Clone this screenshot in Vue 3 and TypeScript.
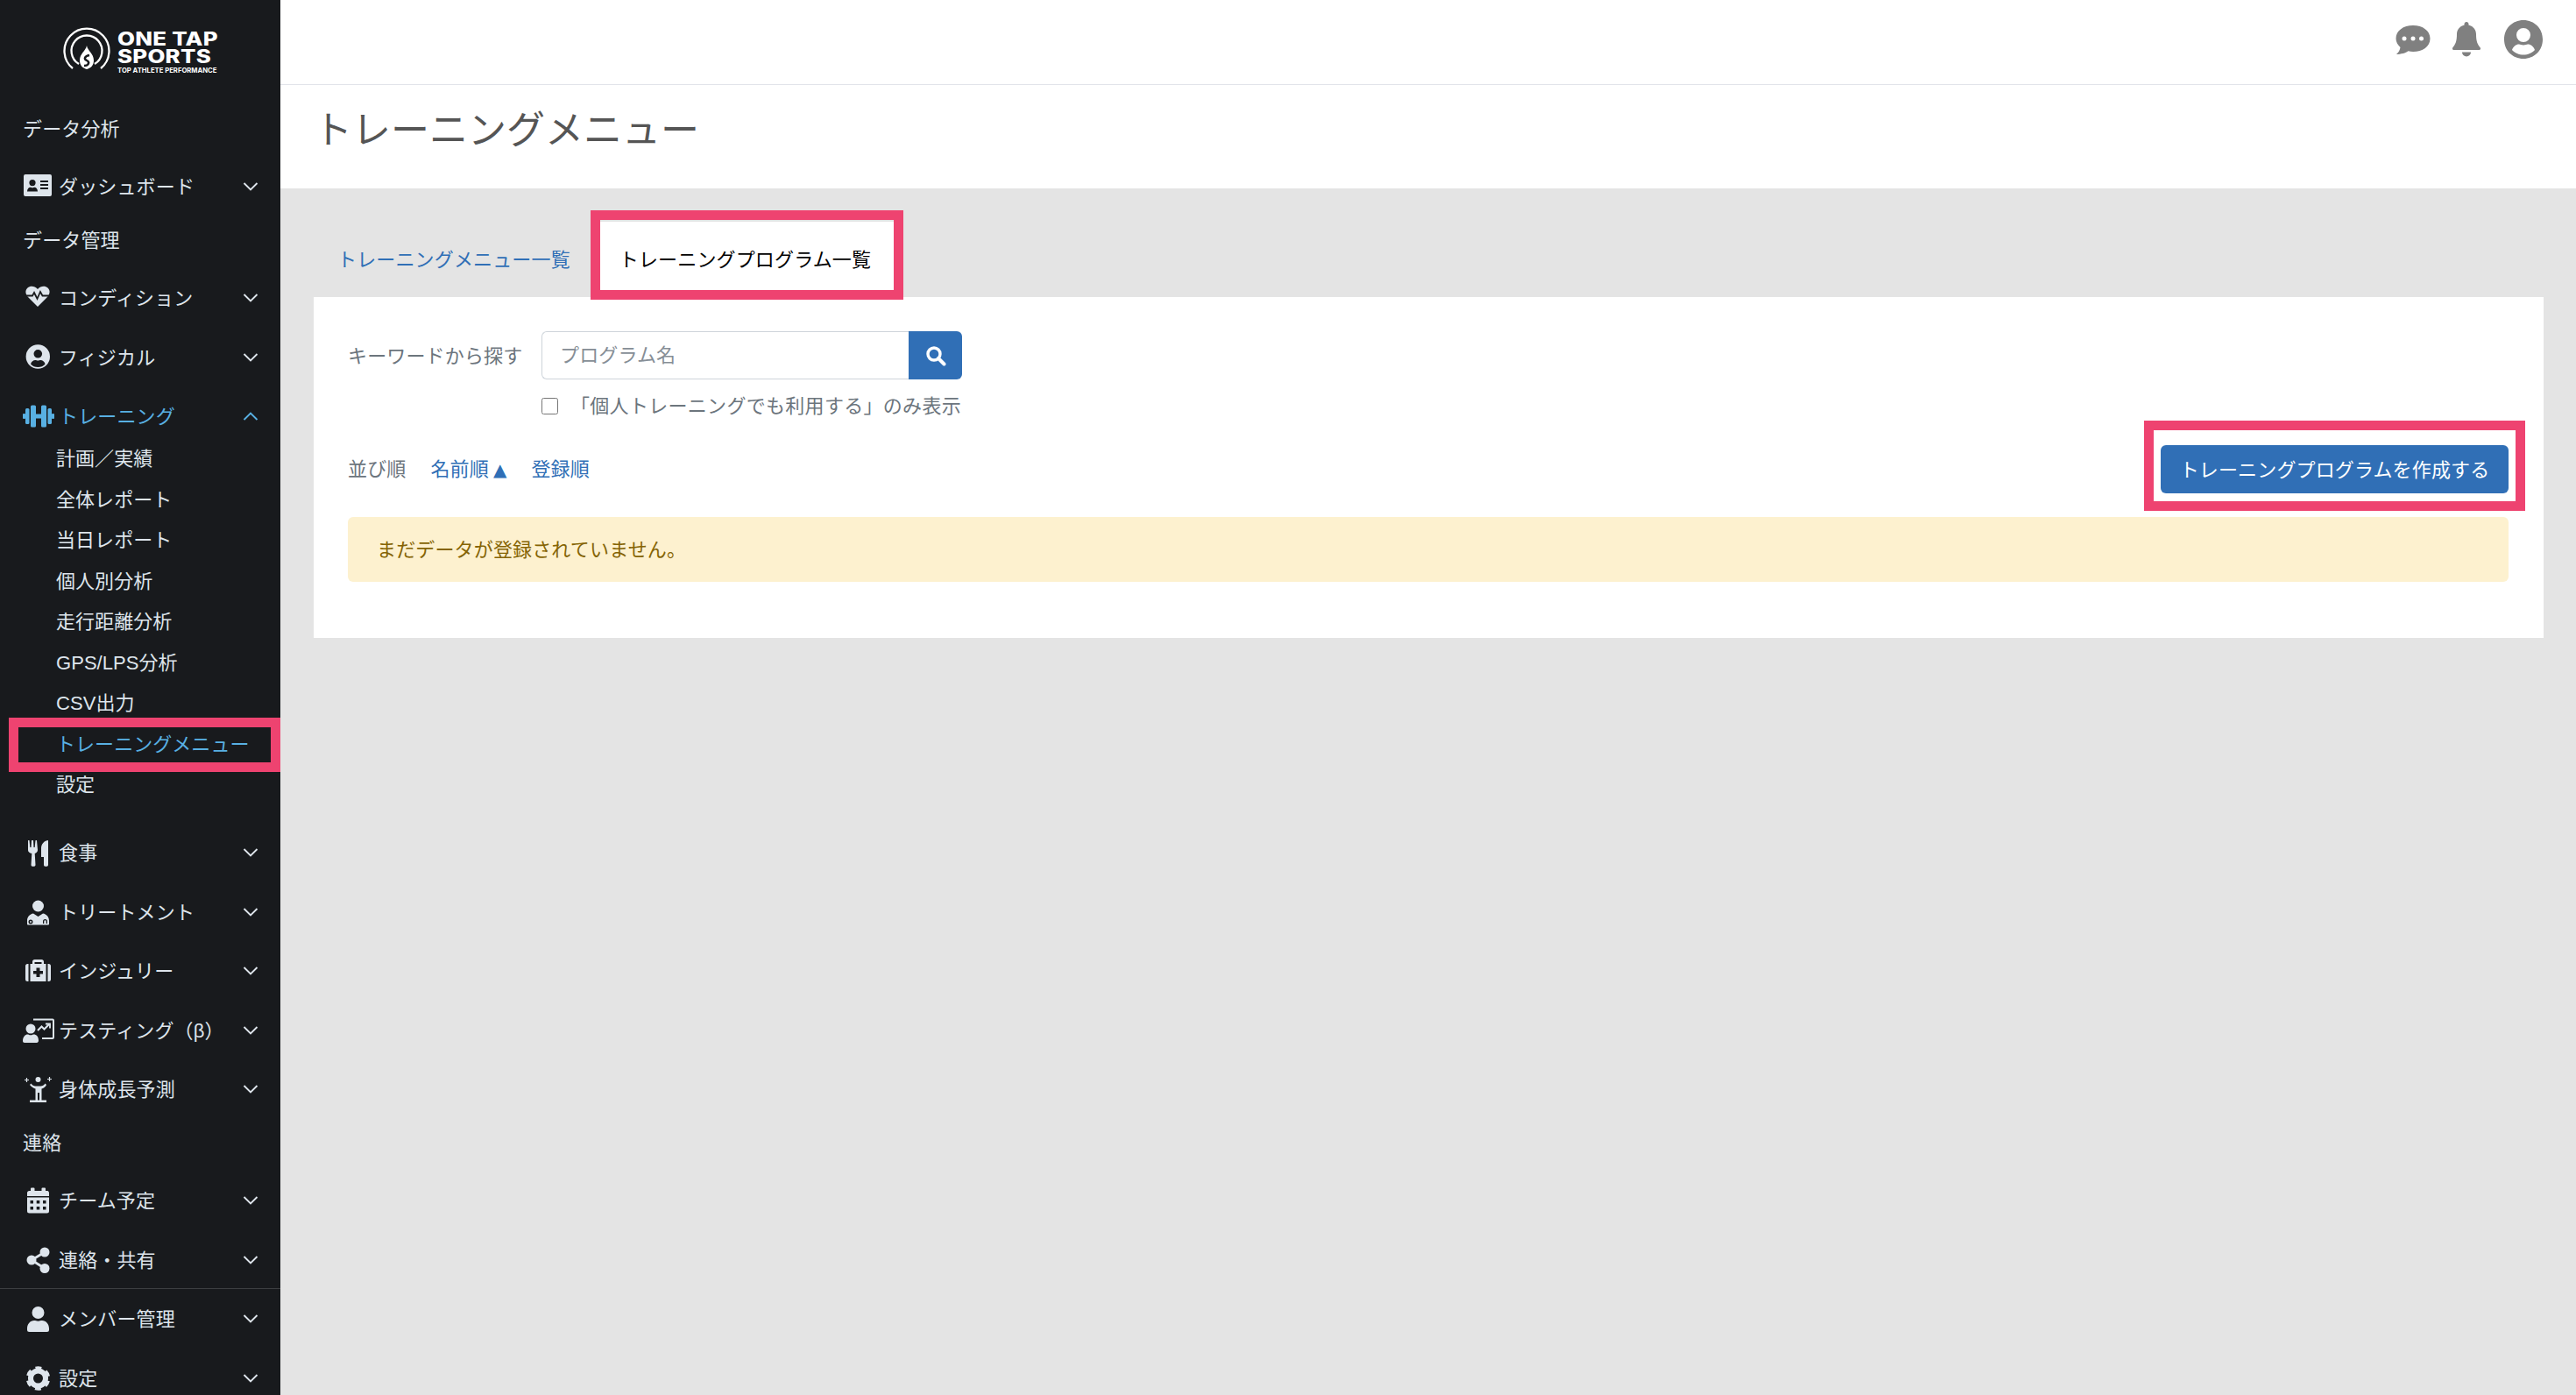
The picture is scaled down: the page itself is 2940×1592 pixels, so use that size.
<script setup lang="ts">
interface Entry {
  kind: 'label' | 'item'
  text: string
  icon?: string
  open?: boolean
  rule?: boolean
  subs?: string[]
}
const menu: Entry[] = [
  { kind: 'label', text: 'データ分析' },
  { kind: 'item', text: 'ダッシュボード', icon: 'card' },
  { kind: 'label', text: 'データ管理' },
  { kind: 'item', text: 'コンディション', icon: 'heart' },
  { kind: 'item', text: 'フィジカル', icon: 'ucircle' },
  {
    kind: 'item', text: 'トレーニング', icon: 'dumbbell', open: true,
    subs: ['計画／実績', '全体レポート', '当日レポート', '個人別分析', '走行距離分析', 'GPS/LPS分析', 'CSV出力', 'トレーニングメニュー', '設定'],
  },
  { kind: 'item', text: '食事', icon: 'food' },
  { kind: 'item', text: 'トリートメント', icon: 'doctor' },
  { kind: 'item', text: 'インジュリー', icon: 'aid' },
  { kind: 'item', text: 'テスティング（β）', icon: 'board' },
  { kind: 'item', text: '身体成長予測', icon: 'grow' },
  { kind: 'label', text: '連絡' },
  { kind: 'item', text: 'チーム予定', icon: 'cal' },
  { kind: 'item', text: '連絡・共有', icon: 'share' },
  { kind: 'item', text: 'メンバー管理', icon: 'user', rule: true },
  { kind: 'item', text: '設定', icon: 'cog' },
]
const activeSub = 'トレーニングメニュー'
</script>

<template>
  <div class="app">
    <svg class="sprite" aria-hidden="true">
      <defs>
        <symbol id="i-card" viewBox="0 0 36 36">
          <path fill-rule="evenodd" d="M3 4h28a2 2 0 0 1 2 2v21a2 2 0 0 1-2 2H3a2 2 0 0 1-2-2V6a2 2 0 0 1 2-2zM11 10a3.6 3.6 0 1 0 0 7.2 3.6 3.6 0 0 0 0-7.200zM5 23.500h12c0-3-2-4.800-3.500-4.800-1 0-1.500.5-2.500.5s-1.500-.5-2.500-.5C7 18.700 5 20.500 5 23.500zM20 11v2h9v-2zM20 15v2h9v-2zM20 19v2h9v-2z" fill="currentColor" />
        </symbol>
        <symbol id="i-heart" viewBox="0 0 36 36">
          <path d="M17 28 6.500 17.500C3 14 2.200 9.500 5.500 6.500c3-2.700 8-2.500 11.500 1.500 3.500-4 8.500-4.200 11.500-1.500 3.300 3 2.500 7.500-1 11z" fill="currentColor" />
          <path d="M3.500 15.500h7.500l2-3.500 3.500 7 3.500-8 2.500 4.500h8" fill="none" stroke="#181a1d" stroke-width="1.800" />
        </symbol>
        <symbol id="i-ucircle" viewBox="0 0 36 36">
          <path fill-rule="evenodd" d="M17.300 3.300a13.700 13.700 0 1 1 0 27.400 13.700 13.700 0 0 1 0-27.400zM17.300 9a4.800 4.800 0 1 0 0 9.600 4.800 4.800 0 0 0 0-9.600zM9 25.500c2 2.400 5 3.500 8.300 3.500s6.300-1.100 8.300-3.500c-.8-2.800-3-4.500-5.300-4.500-1 0-1.700.6-3 .6s-2-.6-3-.6c-2.300 0-4.500 1.700-5.300 4.500z" fill="currentColor" />
        </symbol>
        <symbol id="i-dumbbell" viewBox="0 0 36 36">
          <g fill="currentColor">
            <rect x="0" y="15" width="3" height="6" rx="1" />
            <rect x="3" y="9" width="4.500" height="18" rx="1.500" />
            <rect x="9" y="5.500" width="6" height="25" rx="1.500" />
            <rect x="15" y="15.500" width="6" height="5" />
            <rect x="21" y="5.500" width="6" height="25" rx="1.500" />
            <rect x="28.500" y="9" width="4.500" height="18" rx="1.500" />
            <rect x="33" y="15" width="3" height="6" rx="1" />
          </g>
        </symbol>
        <symbol id="i-food" viewBox="0 0 36 36">
          <path d="M6 4h1.500l.8 8h1.200l.5-8h2l.5 8h1.200l.8-8H16l1 11c0 2-1.500 3.500-3.300 4l.8 13c0 1-.8 1.800-2 1.800h-1c-1.200 0-2-.8-2-1.800l.8-13C7.500 18.500 6 17 6 15zM29 4v28c0 1-.8 1.800-1.800 1.800h-1.400c-1 0-1.800-.8-1.800-1.800v-9H21V13c0-5 4-9 8-9z" fill="currentColor" />
        </symbol>
        <symbol id="i-doctor" viewBox="0 0 36 36">
          <circle cx="17.500" cy="11" r="6.500" fill="currentColor" />
          <path fill-rule="evenodd" d="M5 31.500v-4c0-4 3-7.500 7-8l5.500 3.500 5.500-3.500c4 .5 7 4 7 8v4a1 1 0 0 1-1 1H6a1 1 0 0 1-1-1zM9 26.500a2.500 2.500 0 1 0 0 5 2.500 2.500 0 0 0 0-5zM9 28a1 1 0 1 1 0 2 1 1 0 0 1 0-2zM23 31v-2.500a2.500 2.500 0 0 1 5 0V31h-1.300v-2.500a1.200 1.200 0 0 0-2.400 0V31z" fill="currentColor" />
        </symbol>
        <symbol id="i-aid" viewBox="0 0 36 36">
          <path fill-rule="evenodd" d="M11 10V7.500c0-1.500 1.200-2.500 2.500-2.500h8c1.300 0 2.500 1 2.500 2.500V10h-2.500V8h-8v2zM8.500 10h18v20h-18zM15.500 14.500v3.500H12v3.500h3.500V25H19.500v-3.500H23V18h-3.500v-3.500zM3 12.500A2.500 2.500 0 0 1 5.500 10H6.500v20H5.500A2.500 2.500 0 0 1 3 27.500zM28.500 10h1A2.500 2.500 0 0 1 32 12.500v15a2.500 2.500 0 0 1-2.500 2.500h-1z" fill="currentColor" />
        </symbol>
        <symbol id="i-board" viewBox="0 0 36 36">
          <circle cx="9" cy="16" r="5.500" fill="currentColor" />
          <path d="M0 30c0-5 3-7.500 5.500-7.500 1 0 2 .8 3.500.8s2.500-.8 3.500-.8c3 0 5.500 2.500 5.500 7 0 1.500-1 2.500-2 2.500H2c-1.200 0-2-.9-2-2z" fill="currentColor" />
          <path d="M12 5.500h22a1 1 0 0 1 1 1V26a1 1 0 0 1-1 1H22" fill="none" stroke="currentColor" stroke-width="2" />
          <path d="M17 18l4.500-4.500 3 3L30 11" fill="none" stroke="currentColor" stroke-width="2" />
          <path d="M26 10.500h5v5" fill="none" stroke="currentColor" stroke-width="1.800" />
        </symbol>
        <symbol id="i-grow" viewBox="0 0 36 36">
          <circle cx="17.500" cy="7" r="3" fill="currentColor" />
          <path d="M9.500 11.500c1 2 3.500 3 5 3h6c1.500 0 4-1 5-3l1.500 1.500c-1 2.500-3.500 4-5.500 4.500V31h-2.500v-9h-2v9H14.500V17.500C12.500 17 10 15.500 8 13z" fill="currentColor" />
          <rect x="8" y="30.500" width="19" height="2.500" fill="currentColor" />
          <path d="M4.500 5v5M2 7.500h5M30.500 4v5M28 6.500h5" stroke="currentColor" stroke-width="1.200" />
        </symbol>
        <symbol id="i-cal" viewBox="0 0 36 36">
          <path fill-rule="evenodd" d="M10 3.500h2.500a1 1 0 0 1 1 1V7h8V4.500a1 1 0 0 1 1-1H25a1 1 0 0 1 1 1V7h2.500A2.500 2.500 0 0 1 30 9.500V13H5V9.500A2.500 2.500 0 0 1 7.500 7H9V4.500a1 1 0 0 1 1-1zM5 14.500h25V30a2.500 2.500 0 0 1-2.500 2.500h-20A2.500 2.500 0 0 1 5 30zM8.500 18v3.500h3.500V18zM15.700 18v3.500h3.600V18zM23 18v3.500h3.500V18zM8.500 25v3.500h3.500V25zM15.700 25v3.500h3.600V25zM23 25v3.500h3.500V25z" fill="currentColor" />
        </symbol>
        <symbol id="i-share" viewBox="0 0 36 36">
          <g fill="currentColor">
            <circle cx="25" cy="9" r="5.500" />
            <circle cx="10" cy="18" r="5.500" />
            <circle cx="25" cy="27.500" r="5.500" />
          </g>
          <path d="M25 9 10 18l15 9.500" fill="none" stroke="currentColor" stroke-width="2.800" />
        </symbol>
        <symbol id="i-user" viewBox="0 0 36 36">
          <circle cx="17.500" cy="11" r="7" fill="currentColor" />
          <path d="M5 29c0-5 3.500-9 8-9 1.500 0 2.500.7 4.500.7s3-.7 4.500-.7c4.500 0 8 4 8 9v1.500a2.500 2.500 0 0 1-2.500 2.500h-20A2.500 2.500 0 0 1 5 30.500z" fill="currentColor" />
        </symbol>
        <symbol id="i-cog" viewBox="0 0 36 36">
          <circle cx="17.500" cy="18" r="8.500" fill="none" stroke="currentColor" stroke-width="6" />
          <circle cx="17.500" cy="18" r="11.500" fill="none" stroke="currentColor" stroke-width="4.500" stroke-dasharray="6.500 5.540" transform="rotate(14 17.500 18)" />
        </symbol>
      </defs>
    </svg>

    <aside class="sidebar">
      <div class="logo">
        <svg class="logo-mark" viewBox="0 0 54 54" aria-hidden="true">
          <path d="M11 48A25.500 25.500 0 1 1 43 48" fill="none" stroke="#fff" stroke-width="2.300" />
          <path d="M18 43A17.500 17.500 0 1 1 36 43" fill="none" stroke="#fff" stroke-width="2.300" />
          <path d="M27 22C28 28 35 31 35 39 35 45 31 48 27 49 23 48 19 45 19 39 19 31 26 28 27 22Z" fill="#fff" />
          <path d="M30 33C25 34 23 37 27 39 31 41 29 45 24 45" fill="none" stroke="#181a1d" stroke-width="2.500" />
        </svg>
        <div class="logo-text">
          <div class="logo-big">ONE TAP</div>
          <div class="logo-big">SPORTS</div>
          <div class="logo-small">TOP ATHLETE PERFORMANCE</div>
        </div>
      </div>

      <nav class="menu">
        <template v-for="entry in menu" :key="entry.text + entry.kind">
          <div v-if="entry.kind === 'label'" class="label">{{ entry.text }}</div>
          <template v-else>
            <hr v-if="entry.rule" class="rule" />
            <div class="item" :class="{ active: entry.open }">
              <svg class="icon"><use :href="'#i-' + entry.icon" /></svg>
              <span class="item-text">{{ entry.text }}</span>
              <svg class="chev" viewBox="0 0 18 12" aria-hidden="true">
                <path :d="entry.open ? 'M1.500 10 9 2.500 16.500 10' : 'M1.500 2 9 9.500 16.500 2'" fill="none" stroke="currentColor" stroke-width="1.900" />
              </svg>
            </div>
            <ul v-if="entry.subs" class="subs">
              <li v-for="sub in entry.subs" :key="sub" class="sub" :class="{ current: sub === activeSub }">
                {{ sub }}
                <span v-if="sub === activeSub" class="mark mark-sub"></span>
              </li>
            </ul>
          </template>
        </template>
      </nav>
    </aside>

    <div class="main">
      <header class="topbar">
        <svg class="top-chat" viewBox="0 0 40 36" aria-hidden="true">
          <path d="M20 2c11 0 19.500 6 19.500 15S31 32 20 32c-2 0-3.500-.2-5.500-.7C12 33.500 6 35 1 35c2.500-2 4-5 4.500-8C2.500 24 .5 21 .5 17 .5 8 9 2 20 2z" fill="#808080" />
          <circle cx="10" cy="17" r="2.500" fill="#fff" />
          <circle cx="20" cy="17" r="2.500" fill="#fff" />
          <circle cx="29.500" cy="17" r="2.500" fill="#fff" />
        </svg>
        <svg class="top-bell" viewBox="0 0 34 40" aria-hidden="true">
          <path d="M17 0a2.500 2.500 0 0 1 2.300 3.500C25 5 28 9 28 14c0 8 1.500 11.500 4.500 15 1 1.200.7 3-1.200 3H2.700C.8 32 .5 30.200 1.500 29 4.500 25.500 6 22 6 14c0-5 3-9 8.700-10.500A2.500 2.500 0 0 1 17 0z" fill="#808080" />
          <path d="M12 34.500h10a5 5 0 0 1-10 0z" fill="#808080" />
        </svg>
        <svg class="top-user" viewBox="0 0 44 46" aria-hidden="true">
          <path fill-rule="evenodd" d="M22 1c12.500 0 22 9.500 22 22s-9.500 22-22 22S0 35.500 0 23 9.500 1 22 1zm0 9a8 8 0 1 0 0 16 8 8 0 0 0 0-16zM9 35c3 3.500 8 5.500 13 5.500s10-2 13-5.500c-1.500-4-4.500-6.500-8-6.500-1.500 0-2.500 1-5 1s-3.500-1-5-1c-3.500 0-6.500 2.500-8 6.500z" fill="#808080" />
        </svg>
      </header>

      <div class="title-bar">
        <h1 class="title">トレーニングメニュー</h1>
      </div>

      <main class="content">
        <div class="tabs">
          <a class="tab">トレーニングメニュー一覧</a>
          <a class="tab tab-on">
            トレーニングプログラム一覧
            <span class="mark mark-tab"></span>
          </a>
        </div>

        <section class="card">
          <div class="search-row">
            <label class="search-label">キーワードから探す</label>
            <div class="search-group">
              <input class="search-input" type="text" placeholder="プログラム名" />
              <button class="search-btn" type="button" aria-label="検索">
                <svg viewBox="0 0 24 24" class="search-icon" aria-hidden="true">
                  <circle cx="10" cy="10" r="7" fill="none" stroke="#fff" stroke-width="3.400" />
                  <path d="M15 15l6.500 6.500" stroke="#fff" stroke-width="4" stroke-linecap="round" />
                </svg>
              </button>
            </div>
          </div>

          <label class="check-row">
            <input class="check" type="checkbox" />
            <span>「個人トレーニングでも利用する」のみ表示</span>
          </label>

          <div class="sort-row">
            <div class="sort">
              <span class="sort-label">並び順</span>
              <a class="sort-link">名前順<span class="tri">▲</span></a>
              <a class="sort-link">登録順</a>
            </div>
            <button class="create" type="button">
              <span class="create-text">トレーニングプログラムを作成する</span>
              <span class="mark mark-btn"></span>
            </button>
          </div>

          <div class="alert">まだデータが登録されていません。</div>
        </section>
      </main>
    </div>
  </div>
</template>

<style scoped>
.app {
  display: flex;
  height: 1592px;
  overflow: hidden;
  font-family: "Liberation Sans", "Noto Sans CJK JP", sans-serif;
  font-size: 22px;
  letter-spacing: 0.15px;
  color: #6c757d;
}
.sprite {
  position: absolute;
  width: 0;
  height: 0;
}
.sidebar {
  flex: 0 0 320px;
  width: 320px;
  height: 1592px;
  background: #181a1d;
  color: #dee5ec;
  overflow: hidden;
}
.logo {
  height: 120px;
  display: flex;
  align-items: flex-start;
  padding: 30px 0 0 72px;
  box-sizing: border-box;
  gap: 8px;
}
.logo-mark {
  width: 54px;
  height: 54px;
  flex: none;
}
.logo-text {
  color: #fff;
  padding-top: 5px;
  font-family: Inter, "Liberation Sans", sans-serif;
  letter-spacing: 0;
}
.logo-big {
  font-size: 21px;
  font-weight: 800;
  line-height: 20px;
  letter-spacing: 0.2px;
  transform: scaleX(1.23);
  transform-origin: left;
  white-space: nowrap;
}
.logo-small {
  font-size: 7.700px;
  font-weight: 700;
  line-height: 10px;
  white-space: nowrap;
  margin-top: 1px;
}
.menu {
  display: flex;
  flex-direction: column;
}
.label {
  height: 56px;
  line-height: 56px;
  padding-left: 26px;
  margin-bottom: 3.500px;
  flex: none;
}
.item {
  height: 67.500px;
  flex: none;
  display: flex;
  align-items: center;
  padding: 0 25px 0 26px;
  box-sizing: border-box;
}
.item.active {
  color: #58b0e3;
}
.icon {
  width: 36px;
  height: 36px;
  flex: none;
  margin-right: 5px;
  color: #dee5ec;
}
.item.active .icon {
  color: #58b0e3;
}
.item-text {
  flex: 1;
  white-space: nowrap;
  padding-bottom: 4px;
}
.chev {
  width: 18px;
  height: 12px;
  flex: none;
}
.rule {
  height: 1px;
  border: 0;
  margin: -2px 0 1px;
  background: #3c3e41;
  flex: none;
}
.subs {
  list-style: none;
  margin: -8px 0 20px;
  padding: 0;
}
.sub {
  position: relative;
  height: 46.500px;
  line-height: 46.500px;
  padding-left: 64px;
  letter-spacing: 0.05px;
}
.sub.current {
  color: #58b0e3;
}
.mark {
  position: absolute;
  border: 11px solid #ee4370;
  box-sizing: border-box;
  pointer-events: none;
}
.mark-sub {
  left: 10px;
  right: 0;
  top: -8px;
  height: 62px;
}
.main {
  flex: 1;
  min-width: 0;
  display: flex;
  flex-direction: column;
  background: #e4e4e4;
}
.topbar {
  height: 97px;
  box-sizing: border-box;
  background: #fff;
  border-bottom: 1px solid #e2e4ea;
  display: flex;
  align-items: center;
  justify-content: flex-end;
  padding: 0 38px 7px 0;
  flex: none;
}
.top-chat {
  width: 40px;
  height: 36px;
  margin-right: 24px;
}
.top-bell {
  width: 34px;
  height: 40px;
  margin-right: 26px;
}
.top-user {
  width: 44px;
  height: 46px;
}
.title-bar {
  height: 118px;
  background: #fff;
  flex: none;
  padding-left: 38px;
  box-sizing: border-box;
}
.title {
  margin: 0;
  font-size: 44px;
  font-weight: 400;
  letter-spacing: 0;
  color: #555;
  line-height: 104px;
}
.content {
  padding: 38px 37px 0 38px;
}
.tabs {
  display: flex;
  height: 86px;
  gap: 1px;
}
.tab {
  position: relative;
  padding: 0 28px 0 27px;
  line-height: 88px;
  color: #306fb6;
  white-space: nowrap;
}
.tab-on {
  background: #fff;
  color: #000;
}
.mark-tab {
  left: -6px;
  right: -9px;
  top: -13px;
  bottom: -3px;
}
.card {
  background: #fff;
  height: 389px;
  box-sizing: border-box;
  padding: 39px 40px 0 39px;
}
.search-row {
  display: flex;
  align-items: center;
}
.search-label {
  width: 221px;
  flex: none;
  padding-bottom: 3px;
}
.search-group {
  display: flex;
  width: 480px;
  height: 55px;
}
.search-input {
  flex: 1;
  min-width: 0;
  box-sizing: border-box;
  border: 1px solid #ced4da;
  border-right: 0;
  border-radius: 6px 0 0 6px;
  padding: 0 20px;
  font: inherit;
  letter-spacing: inherit;
  outline: none;
}
.search-input::placeholder {
  color: #868e96;
}
.search-btn {
  width: 61px;
  flex: none;
  border: 0;
  padding: 0;
  background: #306fb6;
  border-radius: 0 6px 6px 0;
  display: flex;
  align-items: center;
  justify-content: center;
}
.search-icon {
  width: 24px;
  height: 24px;
}
.check-row {
  display: flex;
  align-items: center;
  margin: 15px 0 0 221px;
  height: 30px;
}
.check {
  width: 19px;
  height: 19px;
  margin: 0 14px 0 0;
  flex: none;
}
.check-row span {
  letter-spacing: 0.3px;
  white-space: nowrap;
  padding-bottom: 4px;
}
.sort-row {
  display: flex;
  align-items: center;
  justify-content: space-between;
  height: 55px;
  margin-top: 30px;
}
.sort {
  display: flex;
  align-items: center;
  gap: 28px;
  padding-bottom: 6px;
}
.sort-link {
  color: #306fb6;
}
.tri {
  font-size: 20px;
  line-height: 1;
  margin-left: 5px;
  font-family: "DejaVu Sans", sans-serif;
}
.create {
  position: relative;
  width: 397px;
  height: 55px;
  border: 0;
  border-radius: 6px;
  background: #306fb6;
  color: #fff;
  font: inherit;
  letter-spacing: inherit;
}
.create-text {
  display: inline-block;
  padding-bottom: 4px;
}
.mark-btn {
  left: -19px;
  right: -19px;
  top: -28px;
  bottom: -20px;
}
.alert {
  margin-top: 27px;
  height: 74px;
  line-height: 75px;
  box-sizing: border-box;
  padding-left: 33px;
  background: #fdf1cf;
  border-radius: 6px;
  color: #856404;
}
</style>

<style>
html,
body {
  margin: 0;
  background: #e4e4e4;
}
</style>
